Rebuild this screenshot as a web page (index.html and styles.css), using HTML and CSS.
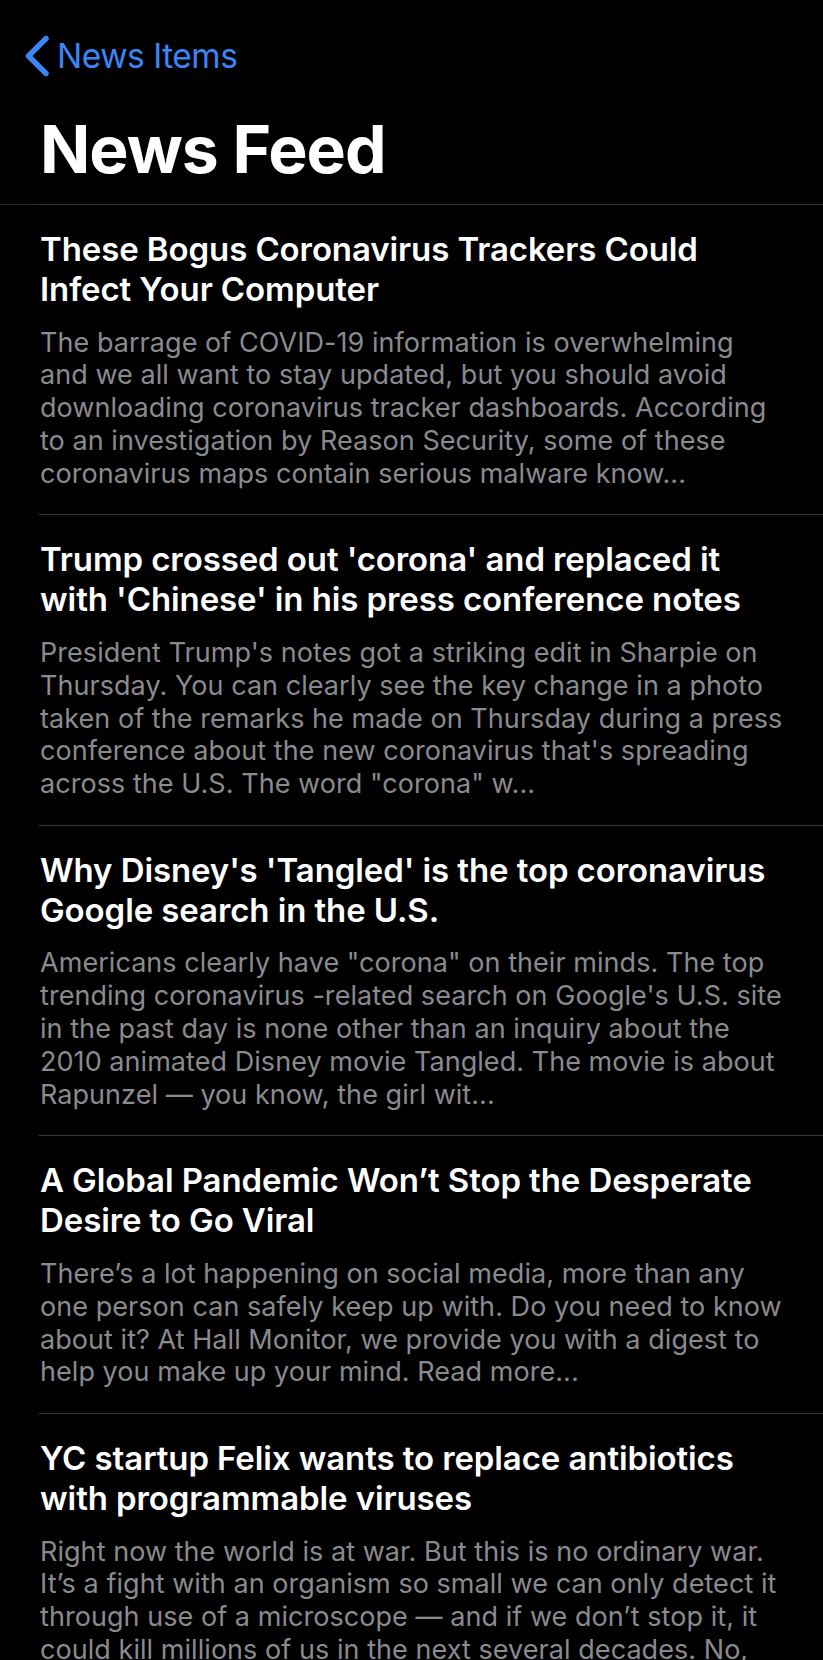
FILE: index.html
```html
<!DOCTYPE html>
<html lang="en">
<head>
<meta charset="utf-8">
<title>News Feed</title>
<link rel="stylesheet" href="styles.css">
</head>
<body>
<div class="screen">
  <header class="nav">
    <div class="backbar">
      <svg class="chevron" width="24" height="42" viewBox="0 0 24 42" aria-hidden="true">
        <path d="M21 3.5 L3.5 21 L21 38.5" fill="none" stroke="currentColor" stroke-width="5.5" stroke-linecap="round" stroke-linejoin="round"/>
      </svg>
      <span class="back-label">News Items</span>
    </div>
    <h1 class="large-title">News Feed</h1>
  </header>
  <ul class="feed">
    <li class="item">
      <h2 class="item-title">These Bogus Coronavirus Trackers Could<br>Infect Your Computer</h2>
      <p class="item-body">The barrage of COVID-19 information is overwhelming<br>and we all want to stay updated, but you should avoid<br>downloading coronavirus tracker dashboards. According<br>to an investigation by Reason Security, some of these<br>coronavirus maps contain serious malware know...</p>
    </li>
    <li class="item">
      <h2 class="item-title">Trump crossed out 'corona' and replaced it<br>with 'Chinese' in his press conference notes</h2>
      <p class="item-body">President Trump's notes got a striking edit in Sharpie on<br>Thursday. You can clearly see the key change in a photo<br>taken of the remarks he made on Thursday during a press<br>conference about the new coronavirus that's spreading<br>across the U.S. The word "corona" w...</p>
    </li>
    <li class="item">
      <h2 class="item-title">Why Disney's 'Tangled' is the top coronavirus<br>Google search in the U.S.</h2>
      <p class="item-body">Americans clearly have "corona" on their minds. The top<br>trending coronavirus -related search on Google's U.S. site<br>in the past day is none other than an inquiry about the<br>2010 animated Disney movie Tangled. The movie is about<br>Rapunzel — you know, the girl wit...</p>
    </li>
    <li class="item">
      <h2 class="item-title">A Global Pandemic Won’t Stop the Desperate<br>Desire to Go Viral</h2>
      <p class="item-body">There’s a lot happening on social media, more than any<br>one person can safely keep up with. Do you need to know<br>about it? At Hall Monitor, we provide you with a digest to<br>help you make up your mind. Read more...</p>
    </li>
    <li class="item">
      <h2 class="item-title">YC startup Felix wants to replace antibiotics<br>with programmable viruses</h2>
      <p class="item-body">Right now the world is at war. But this is no ordinary war.<br>It’s a fight with an organism so small we can only detect it<br>through use of a microscope — and if we don’t stop it, it<br>could kill millions of us in the next several decades. No,<br>I’m not talking about the coronavirus...</p>
    </li>
  </ul>
</div>
</body>
</html>
```

FILE: styles.css
```css
html, body {
  margin: 0;
  padding: 0;
  background: #000;
}

body {
  font-family: Inter, "Noto Sans", "Liberation Sans", sans-serif;
  color: #fff;
  -webkit-font-smoothing: antialiased;
}

.screen {
  width: 823px;
  height: 1660px;
  overflow: hidden;
  background: #000;
}

.nav {
  border-bottom: 1px solid #262628;
}

.backbar {
  display: flex;
  align-items: center;
  gap: 8px;
  padding: 35px 0 0 25px;
  height: 41px;
  color: #3a86f6;
}

.chevron {
  display: block;
  flex: none;
}

.back-label {
  font-size: 33.5px;
  line-height: 40px;
  font-weight: 400;
  letter-spacing: -0.5px;
}

.large-title {
  margin: 33px 0 0 0;
  padding: 0 0 15px 40px;
  font-size: 66px;
  line-height: 80px;
  font-weight: 700;
  letter-spacing: -1px;
}

.feed {
  list-style: none;
  margin: -1px 0 0 0;
  padding: 0 0 0 39px;
}

.item {
  border-top: 1px solid #3a3a3c;
  padding: 24px 20px 24px 1px;
  white-space: nowrap;
}

.item-title {
  margin: 0;
  font-size: 33px;
  line-height: 40px;
  font-weight: 600;
  letter-spacing: -0.1px;
}

.item-body {
  margin: 17.5px 0 0 0;
  font-size: 27px;
  line-height: 32.8px;
  font-weight: 400;
  color: #8a8a8f;
  letter-spacing: 0.05px;
}
```
